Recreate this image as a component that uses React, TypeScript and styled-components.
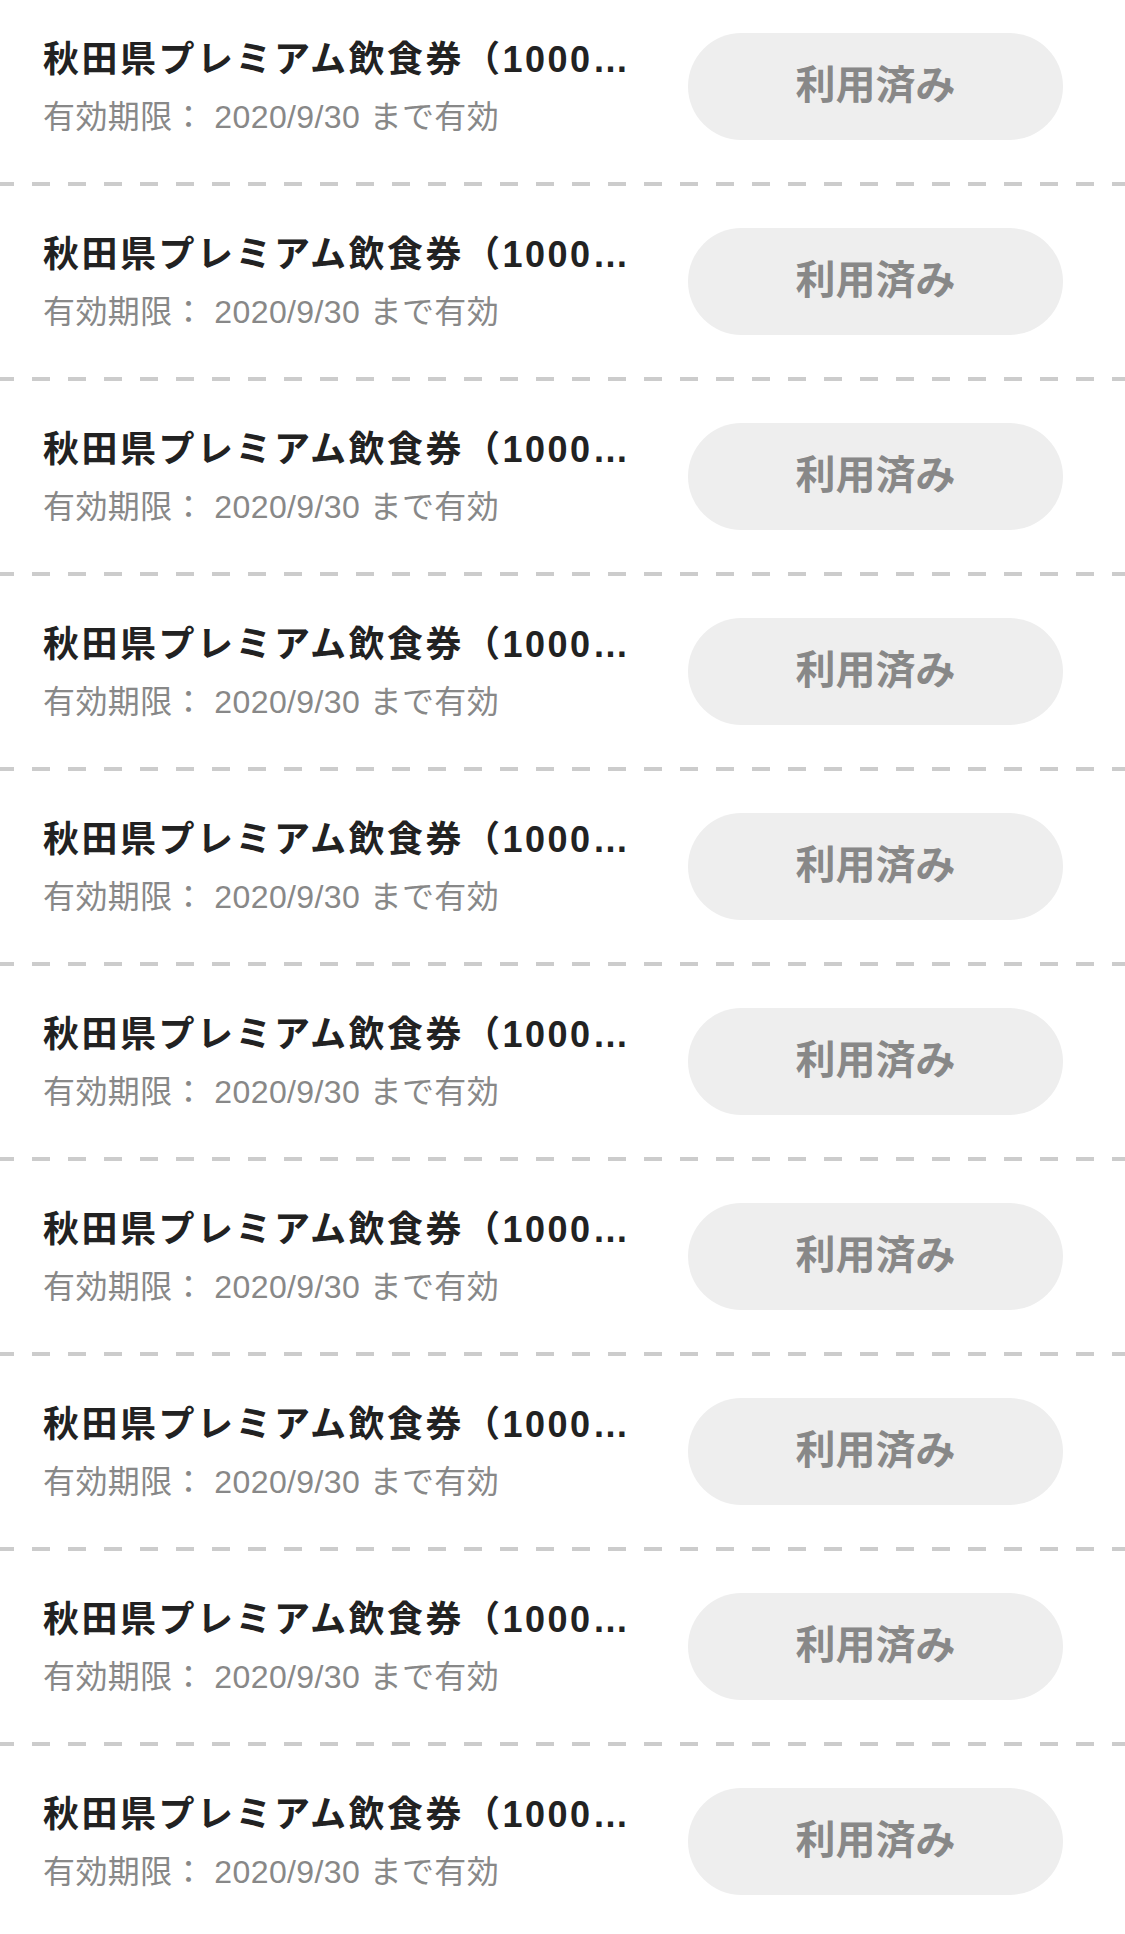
import React from 'react';
import styled, { createGlobalStyle } from 'styled-components';

const GlobalStyle = createGlobalStyle`
body {
  margin: 0;
  background: #fff;
  font-family: "Liberation Sans", "Noto Sans CJK JP", sans-serif;
}
`

const List = styled.div`
display: flex;
flex-direction: column;
`

const Item = styled.div`
display: flex;
align-items: center;
padding: 42px 62px 42px 43px;
&:first-child {
  padding-top: 33px;
}
`

const Info = styled.div`
width: 605px;
min-width: 0;
display: flex;
flex-direction: column;
padding-top: 2px;
`

const Title = styled.div`
font-size: 36px;
line-height: 44px;
font-weight: 700;
color: #222;
letter-spacing: 2.5px;
white-space: nowrap;
overflow: hidden;
text-overflow: ellipsis;
`

const Expire = styled.div`
margin-top: 15px;
font-size: 32px;
line-height: 40px;
color: #888;
letter-spacing: 0.4px;
white-space: nowrap;
`

const UsedButton = styled.button`
margin-left: auto;
flex-shrink: 0;
width: 375px;
height: 107px;
border: none;
border-radius: 54px;
background: #eee;
color: #888;
font-family: "Noto Sans CJK JP", "Noto Sans", sans-serif;
font-size: 40px;
font-weight: 700;
padding: 0 0 10px;
`

const Divider = styled.div`
height: 4px;
background-image: linear-gradient(to right, #ccc 18px, transparent 18px);
background-size: 36px 100%;
background-position: 32px 0;
background-repeat: repeat-x;
`

type Coupon = {
  id: number
  name: string
  expire: string
}

const coupons: Coupon[] = Array.from({ length: 10 }, (_, i) => ({
  id: i,
  name: '秋田県プレミアム飲食券（1000円券×10枚）',
  expire: '2020/9/30',
}))

function App() {
  return (
    <>
      <GlobalStyle />
      <List>
        {coupons.map((c, index) => (
          <React.Fragment key={c.id}>
            {index > 0 && <Divider />}
            <Item>
              <Info>
                <Title>{c.name}</Title>
                <Expire>有効期限： {c.expire} まで有効</Expire>
              </Info>
              <UsedButton>利用済み</UsedButton>
            </Item>
          </React.Fragment>
        ))}
      </List>
    </>
  );
}

export default App;
